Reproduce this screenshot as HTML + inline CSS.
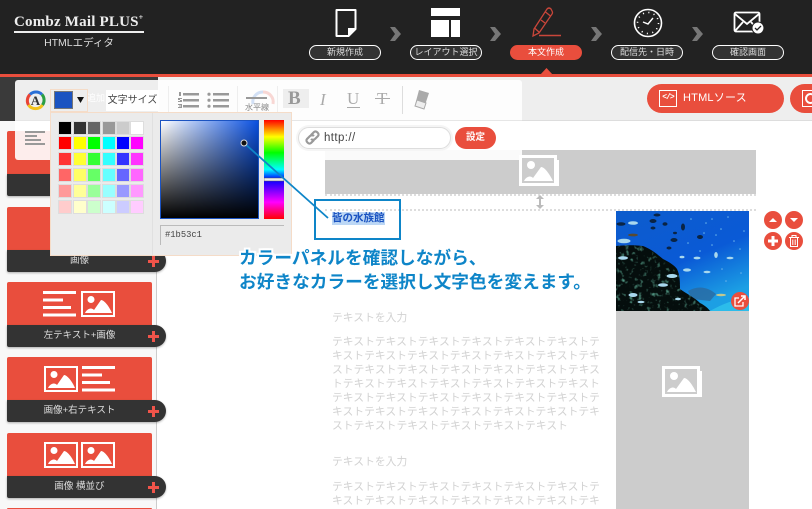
<!DOCTYPE html>
<html lang="ja"><head><meta charset="utf-8"><title>Combz Mail PLUS</title>
<style>
html,body{margin:0;padding:0;width:812px;height:509px;overflow:hidden;background:#fff}
body{font-family:"Liberation Sans","Noto Sans CJK JP",sans-serif}
#root{position:absolute;left:0;top:0;width:812px;height:509px;overflow:hidden;contain:paint}
#root div,#root span,#root svg{position:absolute;box-sizing:border-box}
.pill{top:45px;width:72px;height:15px;border:1.5px solid #fff;border-radius:8px;background:#333;color:#ddd;font-size:9px;line-height:12px;text-align:center;white-space:nowrap}
.chev{top:27px;width:12px;height:14px}
.blk{left:7px;width:145px;height:44px;background:#e94e3d;border-radius:2px 2px 0 0}
.tab{left:7px;width:159px;height:22px;background:#333;border-radius:0 11px 11px 2px;color:#ddd;font-size:9.5px;line-height:21px;box-shadow:0 1px 2px rgba(0,0,0,.3)}
.tab b{position:absolute;left:0;width:145px;text-align:center;font-weight:400}
.tab i{position:absolute;left:141px;top:9.500px;width:11px;height:3px;background:#f0544a}
.tab u{position:absolute;left:145px;top:5.500px;width:3px;height:11px;background:#f0544a}
.sw{width:12px;height:12px;outline:1px solid #ddd}
.txt{left:332px;width:275px;color:#d2d2d2;font-size:10.800px;line-height:14px;white-space:nowrap;font-family:"Noto Sans CJK JP",sans-serif}
.c{width:18px;height:18px;border-radius:50%;background:#e94e3d}
.gl{color:#aaa;font-family:"Liberation Serif",serif;font-size:17px;line-height:20px}
</style></head><body><div id="root">
<svg width="0" height="0" style="left:0;top:0"><defs>
<symbol id="im" viewBox="0 0 34 26"><rect x="1" y="1" width="32" height="24" fill="none" stroke="#fff" stroke-width="2"/><circle cx="10" cy="8.500" r="3.500" fill="#fff"/><path d="M4 22c2-4 6-6 9-3l7-10c3 0 8 6 11 13z" fill="#fff"/></symbol>
<symbol id="gim" viewBox="0 0 42 34"><path d="M4 31h36V5h-2v24H4z" fill="#fff"/><rect x="1.500" y="1.500" width="35" height="28" fill="none" stroke="#fff" stroke-width="3"/><circle cx="12" cy="10" r="4" fill="#fff"/><path d="M5 26c2-4 6-6 9-3l8-11c4 0 9 8 12 14z" fill="#fff"/></symbol>
<symbol id="ln" viewBox="0 0 33 26"><path d="M0 0h33v3H0zM0 7.500h20v3H0zM0 15h28v3H0zM0 22.500h33v3H0z" fill="#fff"/></symbol>
<linearGradient id="hue" x1="0" y1="0" x2="0" y2="1"><stop offset="0" stop-color="#f00"/><stop offset=".17" stop-color="#ff0"/><stop offset=".33" stop-color="#0f0"/><stop offset=".5" stop-color="#0ff"/><stop offset=".6" stop-color="#00f"/><stop offset=".83" stop-color="#f0f"/><stop offset="1" stop-color="#f00"/></linearGradient>
<linearGradient id="sea" x1="0" y1="0" x2=".55" y2="1"><stop offset="0" stop-color="#0d5ccc"/><stop offset=".6" stop-color="#0a5ad6"/><stop offset="1" stop-color="#1c9fe4"/></linearGradient>
<filter id="rn" x="0" y="0" width="100%" height="100%"><feTurbulence type="fractalNoise" baseFrequency=".22" numOctaves="2" seed="4"/><feColorMatrix values="0 0 0 0 .08 0 0 0 0 .3 0 0 0 0 .22 3.500 0 0 0 -1.950"/></filter>
<clipPath id="rk"><path d="M0 35c10-1 20-1 27 0 8 3 14 8 20 13 6 3 11 6 14 10 3 6 3 14 3 20 7 5 15 9 20 14 4 2 8 5 10 8H0z"/></clipPath>
</defs></svg>

<!-- backgrounds -->
<div style="left:0;top:0;width:812px;height:74px;background:#222"></div>
<div style="left:0;top:74px;width:812px;height:3px;background:#e94e3d"></div>
<div style="left:158px;top:77px;width:654px;height:44px;background:#eee;border-bottom:1px solid #ddd"></div>
<div style="left:0;top:77px;width:158px;height:44px;background:#3a3a3a"></div>
<div style="left:0;top:121px;width:157px;height:388px;background:#f8f8f8;border-right:1px solid #ccc"></div>
<svg style="left:540px;top:68px" width="13" height="7"><path d="M0 7L6.500 0 13 7z" fill="#e94e3d"/></svg>

<!-- logo -->
<div style="left:14px;top:13px;width:132px;height:19px;color:#eee;font-family:'Liberation Serif',serif;font-size:15px;line-height:19px;white-space:nowrap;font-weight:700;letter-spacing:.2px">Combz Mail PLUS<sup style="font-size:8px;line-height:0">+</sup></div>
<div style="left:14px;top:31px;width:130px;height:2px;background:#eee"></div>
<div style="left:14px;top:36px;width:130px;text-align:center;color:#ddd;font-size:10.500px;line-height:15px">HTMLエディタ</div>

<!-- step icons -->
<svg style="left:334px;top:8px" width="24" height="30" fill="none" stroke="#fff" stroke-width="2"><path d="M2.500 2h19v19l-7 7h-12z" stroke-linejoin="round"/><path d="M15 28v-7h7" fill="#fff"/></svg>
<svg style="left:431px;top:8px" width="30" height="30" fill="#fff"><path d="M0 0h29v8H0zM0 12h18v17H0zM20 12h9v17h-9z"/></svg>
<svg style="left:531px;top:7px" width="32" height="31" fill="none" stroke="#c9463a" stroke-width="1.300"><path d="M2 29l1-7L16 2q2-2 4 0l1 2q1 2 0 3L8 26z"/><path d="M3.500 21l5 4.500M14.500 5l5 4M10 13l4 3"/><path d="M8 28.500h22" stroke-width="1.500"/></svg>
<svg style="left:633px;top:8px" width="30" height="30" fill="none" stroke="#fff"><circle cx="15" cy="15" r="13.500" stroke-width="1.600"/><circle cx="15" cy="15" r="10.500" stroke-width="1.600" stroke-dasharray="1.100 4.398"/><path d="M10 14l5 2 5-6" stroke-width="1.400"/></svg>
<svg style="left:733px;top:11px" width="34" height="24" fill="none" stroke="#fff" stroke-width="1.800"><rect x="1.500" y="1.500" width="25" height="19" rx="1.500"/><path d="M2 3l12 10L26 3M2 20l8-9M26 20l-8-9"/><circle cx="25" cy="17" r="6" fill="#fff" stroke="#222" stroke-width="1"/><path d="M22 17l2 2 4-4" stroke="#222" stroke-width="1.300"/></svg>

<svg class="chev" style="left:390px" width="12" height="14"><path d="M0 0h5l6 7-6 7H0l5-7z" fill="#777"/></svg>
<svg class="chev" style="left:490px" width="12" height="14"><path d="M0 0h5l6 7-6 7H0l5-7z" fill="#777"/></svg>
<svg class="chev" style="left:591px" width="12" height="14"><path d="M0 0h5l6 7-6 7H0l5-7z" fill="#777"/></svg>
<svg class="chev" style="left:692px" width="12" height="14"><path d="M0 0h5l6 7-6 7H0l5-7z" fill="#777"/></svg>

<div class="pill" style="left:309px">新規作成</div>
<div class="pill" style="left:410px">レイアウト選択</div>
<div class="pill" style="left:510px;background:#e94e3d;border-color:#e94e3d;color:#fff">本文作成</div>
<div class="pill" style="left:611px">配信先・日時</div>
<div class="pill" style="left:712px">確認画面</div>

<!-- html buttons -->
<div style="left:647px;top:84px;width:137px;height:29px;border-radius:15px;background:#e94e3d"></div>
<div style="left:659px;top:90px;width:18px;height:17px;border:1.500px solid #fff;color:#fff;font:700 8px/14px 'Liberation Mono',monospace;text-align:center;white-space:nowrap;letter-spacing:-1px">&lt;/&gt;</div>
<div style="left:683px;top:90px;color:#fff;font-size:11px;line-height:16px;white-space:nowrap;letter-spacing:.2px">HTMLソース</div>
<div style="left:790px;top:84px;width:40px;height:29px;border-radius:15px;background:#e94e3d"></div>
<div style="left:802px;top:90px;width:18px;height:17px;border:1.500px solid #fff"></div>
<div style="left:805px;top:93px;width:11px;height:11px;border:2px solid #fff;border-radius:50%"></div>

<!-- sidebar -->
<div class="blk" style="top:131px"></div><div class="tab" style="top:174px;width:145px;border-radius:0 0 2px 2px"></div>
<div class="blk" style="top:207px"></div><div class="tab" style="top:250px"><b>画像</b><i></i><u></u></div>
<div class="blk" style="top:282px"></div><div class="tab" style="top:325px"><b>左テキスト+画像</b><i></i><u></u></div>
<svg style="left:43px;top:291px" width="33" height="26"><use href="#ln"/></svg>
<svg style="left:80px;top:291px" width="36" height="26"><use href="#im"/></svg>
<div class="blk" style="top:357px"></div><div class="tab" style="top:400px"><b>画像+右テキスト</b><i></i><u></u></div>
<svg style="left:43px;top:366px" width="36" height="26"><use href="#im"/></svg>
<svg style="left:82px;top:366px" width="33" height="26"><use href="#ln"/></svg>
<div class="blk" style="top:433px"></div><div class="tab" style="top:476px"><b>画像 横並び</b><i></i><u></u></div>
<svg style="left:43px;top:442px" width="36" height="26"><use href="#im"/></svg>
<svg style="left:80px;top:442px" width="36" height="26"><use href="#im"/></svg>
<div class="blk" style="top:508px;height:1px"></div>

<!-- content -->
<div style="left:325px;top:150px;width:431px;height:44px;background:#ccc"></div>
<svg style="left:519px;top:155px" width="42" height="34"><use href="#gim"/></svg>
<div style="left:325px;top:194px;width:431px;border-top:2px dotted #ddd"></div>
<div style="left:325px;top:209px;width:431px;border-top:2px dotted #ddd"></div>
<svg style="left:535px;top:195px" width="10" height="14" fill="#bbb"><path d="M5 0l4 4H6v6h3l-4 4-4-4h3V4H1z"/></svg>

<div style="left:332px;top:212px;width:53px;height:13px;background:#bcd7f5;color:#1b53c1;font-size:10.500px;font-weight:700;line-height:13px;white-space:nowrap">皆の水族館</div>

<div style="left:616px;top:311px;width:133px;height:198px;background:#ccc"></div>
<svg style="left:662px;top:366px" width="42" height="34"><use href="#gim"/></svg>
<svg style="left:616px;top:211px" width="133" height="100" viewBox="0 0 133 100">
<rect width="133" height="100" fill="url(#sea)"/>
<path d="M72 80c10-6 20-4 28 3l-6 7-18-2z" fill="#2a6aa0" opacity=".8"/>
<path d="M94 100c12-7 26-12 39-14v14z" fill="#2cbcea"/>
<path d="M0 35c10-1 20-1 27 0 8 3 14 8 20 13 6 3 11 6 14 10 3 6 3 14 3 20 7 5 15 9 20 14 4 2 8 5 10 8H0z" fill="#050e0d"/>
<g clip-path="url(#rk)"><rect width="133" height="100" filter="url(#rn)"/></g>
<g fill="#a9d8ee"><ellipse cx="17" cy="12" rx="5" ry="1.800"/><ellipse cx="8" cy="30" rx="6.500" ry="2.300"/><ellipse cx="7" cy="47" rx="5" ry="1.700"/><ellipse cx="56" cy="65" rx="5.500" ry="2"/><ellipse cx="47" cy="74" rx="5" ry="1.800"/><ellipse cx="17" cy="84" rx="4.500" ry="2"/><ellipse cx="81" cy="47" rx="3.500" ry="1.400"/><ellipse cx="71" cy="59" rx="4" ry="1.600"/><ellipse cx="91" cy="61" rx="3.500" ry="1.300"/><ellipse cx="114" cy="47" rx="3.500" ry="1.300"/><ellipse cx="100" cy="44" rx="1.800" ry="3"/><ellipse cx="66" cy="46" rx="2.500" ry="1.300"/><ellipse cx="25" cy="91" rx="3.500" ry="1.200"/><ellipse cx="62" cy="88" rx="3" ry="1.200"/><ellipse cx="105" cy="84" rx="5" ry="1.300" fill="#c2c88e"/></g>
<g fill="#0a2444"><ellipse cx="5" cy="13" rx="4.500" ry="1.700"/><ellipse cx="37" cy="10" rx="3.500" ry="2"/><ellipse cx="41" cy="4" rx="3.500" ry="1.500"/><ellipse cx="67" cy="16" rx="2" ry="3.500"/><ellipse cx="84" cy="26" rx="3" ry="2"/><ellipse cx="58" cy="29" rx="3.500" ry="2"/><ellipse cx="37" cy="17" rx="2.500" ry="1.500"/><ellipse cx="49" cy="13" rx="2.500" ry="1.800"/><ellipse cx="17" cy="24" rx="5" ry="1.400" fill="#5a4a30"/><ellipse cx="53" cy="37" rx="2.500" ry="1.500"/><ellipse cx="59" cy="22" rx="2" ry="1.200"/></g>
<g fill="#6ab4ea"><circle cx="90" cy="12" r=".8"/><circle cx="105" cy="18" r=".8"/><circle cx="118" cy="30" r=".8"/><circle cx="75" cy="8" r=".8"/><circle cx="96" cy="34" r=".8"/><circle cx="124" cy="38" r=".8"/><circle cx="106" cy="58" r=".8"/><circle cx="125" cy="62" r=".8"/><circle cx="72" cy="32" r=".8"/><circle cx="112" cy="6" r=".8"/><circle cx="84" cy="40" r=".8"/><circle cx="100" cy="24" r=".8"/><circle cx="88" cy="22" r=".8"/><circle cx="128" cy="20" r=".8"/><circle cx="110" cy="70" r=".8"/><circle cx="96" cy="8" r=".8"/></g>
</svg>
<div class="c" style="left:731px;top:292px"></div>
<svg style="left:734px;top:295px" width="12" height="12" fill="none" stroke="#fff" stroke-width="1.300"><path d="M9 7v4H1V3h4"/><path d="M4 8l6-6M7 1h4v4" stroke-width="1.500"/></svg>

<div class="c" style="left:764px;top:211px"></div><svg style="left:769px;top:217px" width="8" height="6"><path d="M0 5l4-4 4 4z" fill="#fff"/></svg>
<div class="c" style="left:785px;top:211px"></div><svg style="left:790px;top:218px" width="8" height="6"><path d="M0 0h8L4 4z" fill="#fff"/></svg>
<div class="c" style="left:764px;top:232px"></div><svg style="left:767px;top:235px" width="12" height="12"><path d="M4.500 1h3v3.500H11v3H7.500V11h-3V7.500H1v-3h3.500z" fill="#fff"/></svg>
<div class="c" style="left:785px;top:232px"></div><svg style="left:789px;top:235px" width="10" height="12" fill="none" stroke="#fff"><path d="M0 2.500h10M3 2V.5h4V2M1.500 3v8.500h7V3M3.800 4.500v5.500M6.200 4.500v5.500"/></svg>

<div class="txt" style="top:310px">テキストを入力</div>
<div class="txt" style="top:334px">テキストテキストテキストテキストテキストテキストテ<br>キストテキストテキストテキストテキストテキストテキ<br>ストテキストテキストテキストテキストテキストテキス<br>トテキストテキストテキストテキストテキストテキスト<br>テキストテキストテキストテキストテキストテキストテ<br>キストテキストテキストテキストテキストテキストテキ<br>ストテキストテキストテキストテキストテキスト</div>
<div class="txt" style="top:454px">テキストを入力</div>
<div class="txt" style="top:479px">テキストテキストテキストテキストテキストテキストテ<br>キストテキストテキストテキストテキストテキストテキ<br>ストテキストテキストテキストテキストテキストテキス</div>

<!-- toolbar panel -->
<div style="left:15px;top:80px;width:143px;height:40px;background:#eee;border-radius:3px 0 0 0"></div>
<div style="left:158px;top:80px;width:364px;height:40px;background:#fdfdfd;border-radius:0 3px 0 0"></div>
<div style="left:15px;top:120px;width:507px;height:40px;background:rgba(255,255,255,.9);border-top:1px solid #e6e6e6;border-radius:0 0 3px 3px"></div>
<div style="left:87px;top:92px;color:#fff;font-size:9px;line-height:12px;white-space:nowrap">追加</div>
<svg style="left:250px;top:86px" width="26" height="20" fill="none" stroke-width="3" opacity=".2"><path d="M3 18A10 10 0 0 1 13 6" stroke="#2a6fd6"/><path d="M13 6A10 10 0 0 1 23 18" stroke="#e94335"/></svg>

<svg style="left:25px;top:90px" width="21" height="21" fill="none" stroke-width="3"><path d="M3.500 15A8.500 8.500 0 0 1 5 4.500" stroke="#e94335"/><path d="M5 4.500A8.500 8.500 0 0 1 17 4.500" stroke="#2a6fd6"/><path d="M17 4.500A8.500 8.500 0 0 1 17.500 15" stroke="#2a9e44"/><path d="M3.500 15A8.500 8.500 0 0 0 17.500 15" stroke="#f2c21a"/></svg>
<div style="left:25px;top:90px;width:21px;text-align:center;font:700 13px/21px 'Liberation Serif',serif;color:#333">A</div>
<div style="left:50px;top:89px;width:38px;height:23px;border:1px solid #f5dcc8"></div>
<div style="left:54px;top:91px;width:19px;height:18px;background:#1b53c1;border:1px solid #777"></div>
<svg style="left:77px;top:97px" width="7" height="6"><path d="M0 0h7L3.500 6z" fill="#111"/></svg>
<div style="left:106px;top:90px;width:53px;height:21px;background:#fff;font-size:10px;line-height:21px;text-align:center;color:#444;white-space:nowrap">文字サイズ</div>

<svg style="left:177px;top:91px" width="52" height="18" fill="#999"><path d="M6 2h16v2.500H6zM6 8h16v2.500H6zM6 14h16v2.500H6zM36 2h16v2.500H36zM36 8h16v2.500H36zM36 14h16v2.500H36z"/><circle cx="32" cy="3.200" r="1.600"/><circle cx="32" cy="9.200" r="1.600"/><circle cx="32" cy="15.200" r="1.600"/><path d="M2 1h2v4H2zM1 7h4v1H3v1h2v2H1v-1h2V9H1zM1 13h4v4H1v-1h3v-.5H2v-1h2V14H1z"/></svg>
<div style="left:168px;top:86px;width:1px;height:28px;background:#eee"></div>
<div style="left:237px;top:86px;width:1px;height:28px;background:#eee"></div>
<div style="left:246px;top:97px;width:21px;height:2px;background:#999"></div>
<div style="left:238px;top:103px;width:38px;text-align:center;color:#888;font-size:8px;line-height:10px">水平線</div>
<div style="left:277px;top:86px;width:1px;height:28px;background:#eee"></div>
<div style="left:283px;top:89px;width:26px;height:19px;background:#eee"></div>
<div class="gl" style="left:288px;top:89px;font-weight:700;font-size:19px;color:#999">B</div>
<div class="gl" style="left:320px;top:90px;font-style:italic">I</div>
<div class="gl" style="left:347px;top:89px">U</div>
<div style="left:347px;top:107px;width:13px;height:1px;background:#aaa"></div>
<div class="gl" style="left:377px;top:89px">T</div>
<div style="left:375px;top:98px;width:15px;height:1px;background:#aaa"></div>
<div style="left:402px;top:86px;width:1px;height:28px;background:#ddd"></div>
<svg style="left:413px;top:88px" width="18" height="24"><path d="M6 2l10 3-5 15-9-3z" fill="#aaa"/><path d="M4 12l9 3-2 6-9-3z" fill="#eee" stroke="#aaa"/></svg>

<svg style="left:25px;top:131px" width="21" height="15" fill="#999"><path d="M0 0h20v2H0zM0 4h12v2H0zM0 8h16v2H0zM0 12h20v2H0z"/></svg>

<div style="left:298px;top:127px;width:153px;height:22px;border:1px solid #ddd;border-radius:11px;background:#fff;box-shadow:0 0 0 2px #f5f5f5"></div>
<svg style="left:304px;top:129px" width="17" height="17" fill="none" stroke="#999" stroke-width="2.200"><path d="M7 6l3-3c2-2 6 2 4 4l-3 3c-1 1-3 1-4 0"/><path d="M10 11l-3 3c-2 2-6-2-4-4l3-3c1-1 3-1 4 0"/></svg>
<div style="left:324px;top:131px;color:#444;font-size:11.500px;line-height:15px;letter-spacing:.4px">http://</div>
<div style="left:455px;top:127px;width:41px;height:22px;border-radius:11px;background:#e94e3d;color:#fff;font-size:9.500px;font-weight:700;line-height:22px;text-align:center">設定</div>

<!-- colour picker -->
<div style="left:50px;top:112px;width:242px;height:144px;background:#ebebeb;border:1px solid #f5dcc8"></div>
<div style="left:152px;top:113px;width:1px;height:142px;background:#e0e0e0"></div>
<div class="sw" style="left:59px;top:122px;background:#000"></div><div class="sw" style="left:73.500px;top:122px;background:#333"></div><div class="sw" style="left:88px;top:122px;background:#666"></div><div class="sw" style="left:102.500px;top:122px;background:#999"></div><div class="sw" style="left:116.500px;top:122px;background:#ccc"></div><div class="sw" style="left:131px;top:122px;background:#fff"></div>
<div class="sw" style="left:59px;top:137px;background:#f00"></div><div class="sw" style="left:73.500px;top:137px;background:#ff0"></div><div class="sw" style="left:88px;top:137px;background:#0f0"></div><div class="sw" style="left:102.500px;top:137px;background:#0ff"></div><div class="sw" style="left:116.500px;top:137px;background:#00f"></div><div class="sw" style="left:131px;top:137px;background:#f0f"></div>
<div class="sw" style="left:59px;top:153px;background:#f33"></div><div class="sw" style="left:73.500px;top:153px;background:#ff3"></div><div class="sw" style="left:88px;top:153px;background:#3f3"></div><div class="sw" style="left:102.500px;top:153px;background:#3ff"></div><div class="sw" style="left:116.500px;top:153px;background:#33f"></div><div class="sw" style="left:131px;top:153px;background:#f3f"></div>
<div class="sw" style="left:59px;top:169px;background:#f66"></div><div class="sw" style="left:73.500px;top:169px;background:#ff6"></div><div class="sw" style="left:88px;top:169px;background:#6f6"></div><div class="sw" style="left:102.500px;top:169px;background:#6ff"></div><div class="sw" style="left:116.500px;top:169px;background:#66f"></div><div class="sw" style="left:131px;top:169px;background:#f6f"></div>
<div class="sw" style="left:59px;top:185px;background:#f99"></div><div class="sw" style="left:73.500px;top:185px;background:#ff9"></div><div class="sw" style="left:88px;top:185px;background:#9f9"></div><div class="sw" style="left:102.500px;top:185px;background:#9ff"></div><div class="sw" style="left:116.500px;top:185px;background:#99f"></div><div class="sw" style="left:131px;top:185px;background:#f9f"></div>
<div class="sw" style="left:59px;top:201px;background:#fcc"></div><div class="sw" style="left:73.500px;top:201px;background:#ffc"></div><div class="sw" style="left:88px;top:201px;background:#cfc"></div><div class="sw" style="left:102.500px;top:201px;background:#cff"></div><div class="sw" style="left:116.500px;top:201px;background:#ccf"></div><div class="sw" style="left:131px;top:201px;background:#fcf"></div>

<div style="left:160px;top:120px;width:99px;height:99px;border:1px solid #1b53c1;background:linear-gradient(to top,#000,rgba(0,0,0,0)),linear-gradient(to right,#fff,#0a50e0)"></div>
<svg style="left:264px;top:120px" width="20" height="99"><rect width="20" height="99" fill="url(#hue)"/><rect y="58" width="20" height="3" fill="#eee" stroke="#555" stroke-width=".5"/></svg>
<div style="left:160px;top:225px;width:124px;height:20px;border-top:1px solid #bbb;border-left:1px solid #bbb;color:#444;font:8.800px/19px 'Liberation Mono',monospace;padding-left:4px">#1b53c1</div>

<!-- callout -->
<div style="left:314px;top:199px;width:87px;height:41px;border:2.500px solid #0e85c8"></div>
<svg style="left:238px;top:137px" width="100" height="90"><path d="M6 6L90 81" stroke="#0e85c8" stroke-width="1.800"/><circle cx="6" cy="6" r="3" fill="#111" stroke="#ddd"/></svg>

<div style="left:239px;top:245px;width:370px;color:#0e85c8;font-size:17.700px;font-weight:700;line-height:24px;white-space:nowrap;font-family:'Noto Sans CJK JP',sans-serif;text-shadow:2px 0 0 #fff,-2px 0 0 #fff,0 2px 0 #fff,0 -2px 0 #fff,2px 2px 0 #fff,-2px -2px 0 #fff,2px -2px 0 #fff,-2px 2px 0 #fff">カラーパネルを確認しながら、<br>お好きなカラーを選択し文字色を変えます。</div>
</div></body></html>
